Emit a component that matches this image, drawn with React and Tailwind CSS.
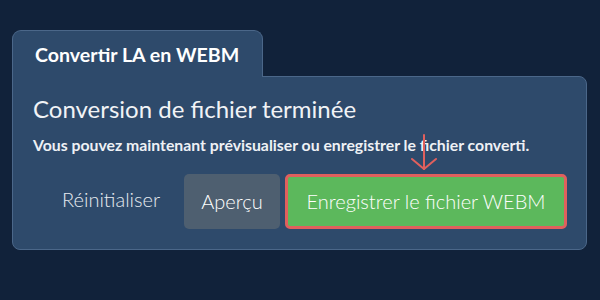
export default function App() {
  return (
    <div className="w-[600px] h-[300px] bg-[#11223a] pt-[30px] pl-[12px] pr-[13px]" style={{ fontFamily: "Lato, 'Noto Sans', sans-serif" }}>
      <div className="relative z-10 w-[251px] h-[47px] -mb-px bg-[#2e4a6b] border border-b-0 border-[#4b6789] rounded-t-[9px] pl-[22px] pt-[14px]">
        <span className="block text-[19.6px] font-bold text-white leading-none">Convertir LA en WEBM</span>
      </div>
      <div className="relative h-[174px] bg-[#2e4a6b] border border-[#4b6789] rounded-b-[8px] rounded-tr-[8px] pl-[20px] pt-[20px]">
        <div className="text-[24px] text-[#f1f3f6] leading-none">Conversion de fichier terminée</div>
        <div className="mt-[16px] text-[15.8px] font-bold text-[#eef1f5] leading-none">Vous pouvez maintenant prévisualiser ou enregistrer le fichier converti.</div>
        <div className="mt-[21px] flex items-center">
          <span className="ml-[29px] w-[122px] text-[20px] font-light text-[#e6eaf0] leading-none -mt-[4px]">Réinitialiser</span>
          <button className="w-[96px] h-[55px] rounded-[5px] bg-[#4e5f70] text-[20px] font-light text-white leading-none">Aperçu</button>
          <button className="ml-[5px] w-[282px] h-[55px] rounded-[5px] bg-[#5cb85c] border-[3px] border-[#e0605d] text-[20px] font-light text-white leading-none">Enregistrer le fichier WEBM</button>
        </div>
        <svg className="absolute left-[398px] top-[57px]" width="26" height="36" viewBox="0 0 26 36" fill="none" stroke="#e0605d" strokeWidth="2" strokeLinecap="round">
          <path d="M13 1 V35" />
          <path d="M1 25 L13 35 L25 25" />
        </svg>
      </div>
    </div>
  );
}
